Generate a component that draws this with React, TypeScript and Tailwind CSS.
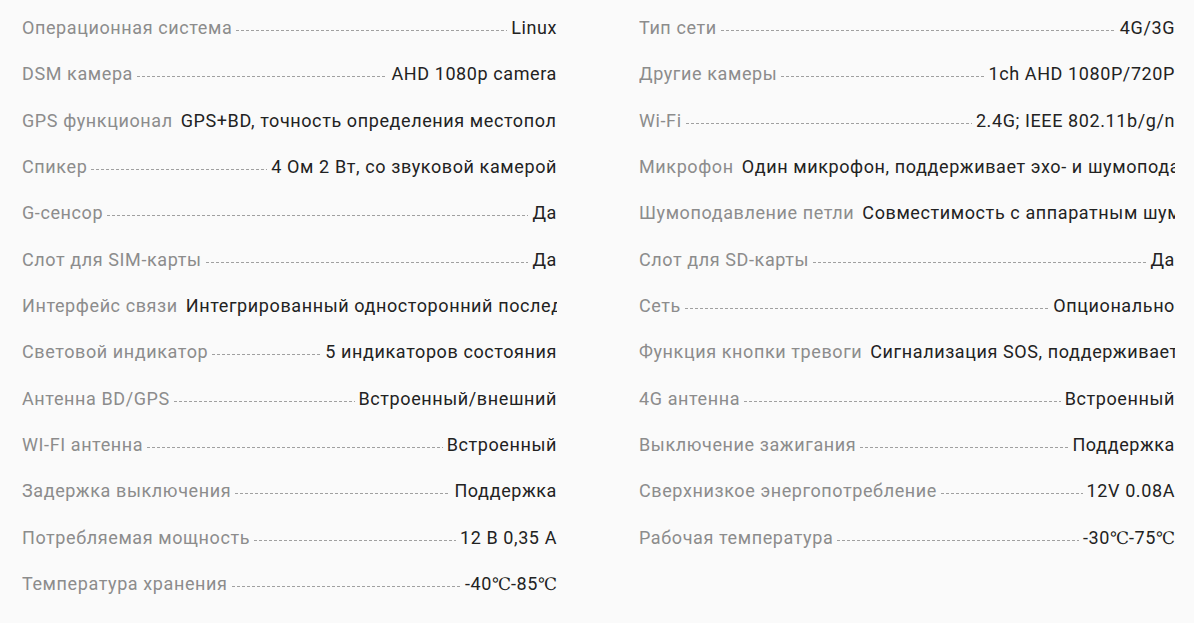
import type { ReactNode } from "react";

const C = () => <span className="font-['DejaVu_Serif',serif] text-[17px] tracking-normal">℃</span>;

const left: [string, ReactNode][] = [
  ["Операционная система", "Linux"],
  ["DSM камера", "AHD 1080p camera"],
  ["GPS функционал", "GPS+BD, точность определения местоположения менее 10 м"],
  ["Спикер", "4 Ом 2 Вт, со звуковой камерой"],
  ["G-сенсор", "Да"],
  ["Слот для SIM-карты", "Да"],
  ["Интерфейс связи", "Интегрированный односторонний последовательный порт RS232"],
  ["Световой индикатор", "5 индикаторов состояния"],
  ["Антенна BD/GPS", "Встроенный/внешний"],
  ["WI-FI антенна", "Встроенный"],
  ["Задержка выключения", "Поддержка"],
  ["Потребляемая мощность", "12 В 0,35 А"],
  ["Температура хранения", <>-40<C />-85<C /></>],
];

const right: [string, ReactNode][] = [
  ["Тип сети", "4G/3G"],
  ["Другие камеры", "1ch AHD 1080P/720P"],
  ["Wi-Fi", "2.4G; IEEE 802.11b/g/n"],
  ["Микрофон", "Один микрофон, поддерживает эхо- и шумоподавление"],
  ["Шумоподавление петли", "Совместимость с аппаратным шумоподавлением"],
  ["Слот для SD-карты", "Да"],
  ["Сеть", "Опционально"],
  ["Функция кнопки тревоги", "Сигнализация SOS, поддерживает отправку"],
  ["4G антенна", "Встроенный"],
  ["Выключение зажигания", "Поддержка"],
  ["Сверхнизкое энергопотребление", "12V 0.08A"],
  ["Рабочая температура", <>-30<C />-75<C /></>],
];

function Row({ label, value }: { label: string; value: ReactNode }) {
  return (
    <div className="flex h-[46.33px] items-baseline overflow-hidden whitespace-nowrap">
      <span className="shrink-0 text-[#8c8c8c]">{label}</span>
      <span className="mx-[4px] h-px min-w-0 flex-1 -translate-y-[3px] bg-[linear-gradient(to_right,#a0a0a0_60%,transparent_60%)] bg-[length:5px_1px] bg-repeat-x" />
      <span className="shrink-0 text-[#222]">{value}</span>
    </div>
  );
}

export default function App() {
  return (
    <main className="h-[623px] w-[1194px] overflow-hidden bg-[#fafafa] pl-[22px] pt-[14px] font-['Roboto',sans-serif] text-[18px] leading-[27px] tracking-[0.6px]">
      <div className="grid grid-cols-[535px_536px] gap-x-[82px]">
        <div className="flex flex-col">
          {left.map(([l, v]) => (
            <Row key={l} label={l} value={v} />
          ))}
        </div>
        <div className="flex flex-col">
          {right.map(([l, v]) => (
            <Row key={l} label={l} value={v} />
          ))}
        </div>
      </div>
    </main>
  );
}
